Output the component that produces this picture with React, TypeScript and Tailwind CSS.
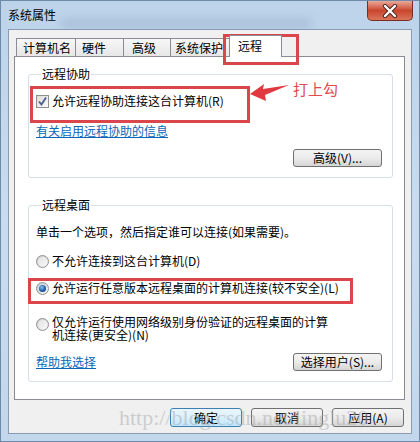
import React from "react";

const Checkbox = () => (
  <span className="w-[13px] h-[13px] border border-[#8e8f8f] bg-gradient-to-br from-[#dcdcdc] to-[#fbfbfb] flex items-center justify-center shrink-0">
    <svg width="11" height="11" viewBox="0 0 11 11">
      <path d="M2 5.5 L4.5 8.5 L9 1.5" fill="none" stroke="#4a5d8f" strokeWidth="1.8" />
    </svg>
  </span>
);

const Radio = ({ on = false }: { on?: boolean }) => (
  <span className="w-[13px] h-[13px] rounded-full border border-[#8f9192] bg-gradient-to-br from-[#c9c9c9] to-[#fafafa] flex items-center justify-center shrink-0">
    {on ? (
      <span className="w-[7px] h-[7px] rounded-full bg-[radial-gradient(circle_at_40%_35%,#8ec3f0,#1d5ea8_55%,#0b3366)]" />
    ) : (
      <span className="w-[9px] h-[9px] rounded-full bg-gradient-to-br from-[#e2e2e2] to-[#f7f7f7]" />
    )}
  </span>
);

const Btn = ({ children, w, def = false }: { children: React.ReactNode; w: string; def?: boolean }) => (
  <div
    className={
      (def
        ? "border-[#3c7fb1] bg-gradient-to-b from-[#eaf6fd] via-[#d9f0fc] to-[#bee6fd] "
        : "border-[#707070] bg-gradient-to-b from-[#f4f4f4] via-[#ebebeb] to-[#d5d5d5] ") +
      w +
      " h-[19px] rounded-[3px] border flex items-center justify-center leading-[14px]"
    }
  >
    {children}
  </div>
);

export default function App() {
  return (
    <div className="relative w-[420px] h-[442px] overflow-hidden bg-gradient-to-b from-[#bcd3ea] via-[#c9dcef] to-[#c3d7ec] border border-[#6f8aa8] font-['Noto_Sans_CJK_SC',sans-serif] text-[12px] text-black">
      {/* glass blur */}
      <div className="absolute left-[60px] top-[18px] w-[250px] h-[9px] bg-[#8fa8c2] blur-[5px] opacity-50" />
      {/* title bar */}
      <div className="relative h-[28px] flex items-start justify-between">
        <div className="pl-[7px] pt-[6px] leading-[16px]">系统属性</div>
        <div className="mr-[6px] w-[46px] h-[20px] rounded-b-[5px] border border-t-0 border-[#7a2e22] bg-gradient-to-b from-[#e9a99a] via-[#c9452c] to-[#d9745a] flex items-center justify-center">
          <svg width="16" height="14" viewBox="0 0 16 14">
            <path d="M3 2 L13 12 M13 2 L3 12" stroke="#4a2520" strokeWidth="4.2" strokeLinecap="round" />
            <path d="M3 2 L13 12 M13 2 L3 12" stroke="#ffffff" strokeWidth="2.4" strokeLinecap="round" />
          </svg>
        </div>
      </div>

      {/* content area */}
      <div className="relative mx-[7px] h-[405px] bg-[#f0f0f0] border border-[#8a9cb3] flex flex-col">
        {/* tabs */}
        <div className="h-[27px] pl-[7px] flex items-end">
          <div className="w-[60px] h-[19px] border border-b-0 border-[#898c95] bg-gradient-to-b from-[#f7f7f7] to-[#e6e6e6] pl-[6px] leading-[18px]">计算机名</div>
          <div className="w-[48px] h-[19px] border border-b-0 border-l-0 border-[#898c95] bg-gradient-to-b from-[#f7f7f7] to-[#e6e6e6] pl-[6px] leading-[18px]">硬件</div>
          <div className="w-[47px] h-[19px] border border-b-0 border-l-0 border-[#898c95] bg-gradient-to-b from-[#f7f7f7] to-[#e6e6e6] pl-[8px] leading-[18px]">高级</div>
          <div className="w-[60px] h-[19px] border border-b-0 border-l-0 border-[#898c95] bg-gradient-to-b from-[#f7f7f7] to-[#e6e6e6] pl-[4px] leading-[18px]">系统保护</div>
          <div className="relative z-10 -ml-[2px] w-[53px] h-[22px] border border-b-0 border-[#898c95] bg-white pl-[8px] pt-[2px] leading-[16px]">远程</div>
        </div>

        {/* panel */}
        <div className="-mt-px ml-[5px] w-[391px] h-[344px] bg-white border border-[#898c95] pl-[13px] pr-[11px] pt-[10px]">
          <fieldset className="border border-[#d5dfe5] rounded-[3px] pl-[7px] pr-[10px] pb-[10px]">
            <legend className="ml-[5px] px-[1px] leading-[14px]">远程协助</legend>
            <div className="mt-[12px] h-[16px] flex items-center gap-[3px]">
              <Checkbox />
              <span className="leading-[14px]">允许远程协助连接这台计算机(R)</span>
            </div>
            <div className="mt-[15px] leading-[14px] text-[#0b66b8] underline">有关启用远程协助的信息</div>
            <div className="mt-[11px] flex justify-end">
              <div className="w-[89px] h-[18px] rounded-[3px] border border-[#707070] bg-gradient-to-b from-[#f4f4f4] via-[#ebebeb] to-[#d5d5d5] flex items-center justify-center leading-[14px]">高级(V)...</div>
            </div>
          </fieldset>

          <fieldset className="mt-[20px] border border-[#d5dfe5] rounded-[3px] pl-[7px] pr-[10px] pb-[10px]">
            <legend className="ml-[5px] px-[1px] leading-[14px]">远程桌面</legend>
            <div className="mt-[13px] leading-[14px]">单击一个选项，然后指定谁可以连接(如果需要)。</div>
            <div className="mt-[14px] h-[16px] flex items-center gap-[3px]">
              <Radio />
              <span className="leading-[14px]">不允许连接到这台计算机(D)</span>
            </div>
            <div className="mt-[11px] h-[16px] flex items-center gap-[3px]">
              <Radio on />
              <span className="leading-[14px]">允许运行任意版本远程桌面的计算机连接(较不安全)(L)</span>
            </div>
            <div className="mt-[19px] flex items-start gap-[3px]">
              <span className="mt-[3px]">
                <Radio />
              </span>
              <span className="w-[282px] leading-[13px]">仅允许运行使用网络级别身份验证的远程桌面的计算机连接(更安全)(N)</span>
            </div>
            <div className="mt-[12px] h-[18px] flex items-center justify-between">
              <span className="leading-[14px] text-[#0b66b8] underline">帮助我选择</span>
              <div className="w-[89px] h-[18px] rounded-[3px] border border-[#707070] bg-gradient-to-b from-[#f4f4f4] via-[#ebebeb] to-[#d5d5d5] flex items-center justify-center leading-[14px]">选择用户(S)...</div>
            </div>
          </fieldset>
        </div>

        {/* bottom buttons */}
        <div className="mt-[8px] pr-[7px] flex justify-end gap-[9px]">
          <Btn w="w-[72px]" def>确定</Btn>
          <Btn w="w-[72px]">取消</Btn>
          <Btn w="w-[72px]">应用(A)</Btn>
        </div>
      </div>

      {/* watermark */}
      <div className="absolute left-[118px] top-[404px] font-['Liberation_Serif',serif] text-[22px] leading-[26px] text-[#a8a8a8]/50 pointer-events-none">
        http://blog.csdn.net/linglu20
      </div>

      {/* red annotations */}
      <div className="absolute left-[222px] top-[33px] w-[76px] h-[31px] border-[3px] border-[#d9474c]" />
      <div className="absolute left-[29px] top-[85px] w-[220px] h-[37px] border-[3px] border-[#d9474c]" />
      <div className="absolute left-[27px] top-[277px] w-[325px] h-[26px] border-[3px] border-[#d9474c]" />
      <svg className="absolute left-[246px] top-[80px]" width="46" height="24" viewBox="0 0 46 24">
        <polygon points="3,13 17,3 16,8 42,4 18,14 19,20" fill="#e0393f" />
      </svg>
      <div className="absolute left-[292px] top-[78px] text-[15px] leading-[20px] text-[#e04a4e]">打上勾</div>
    </div>
  );
}
